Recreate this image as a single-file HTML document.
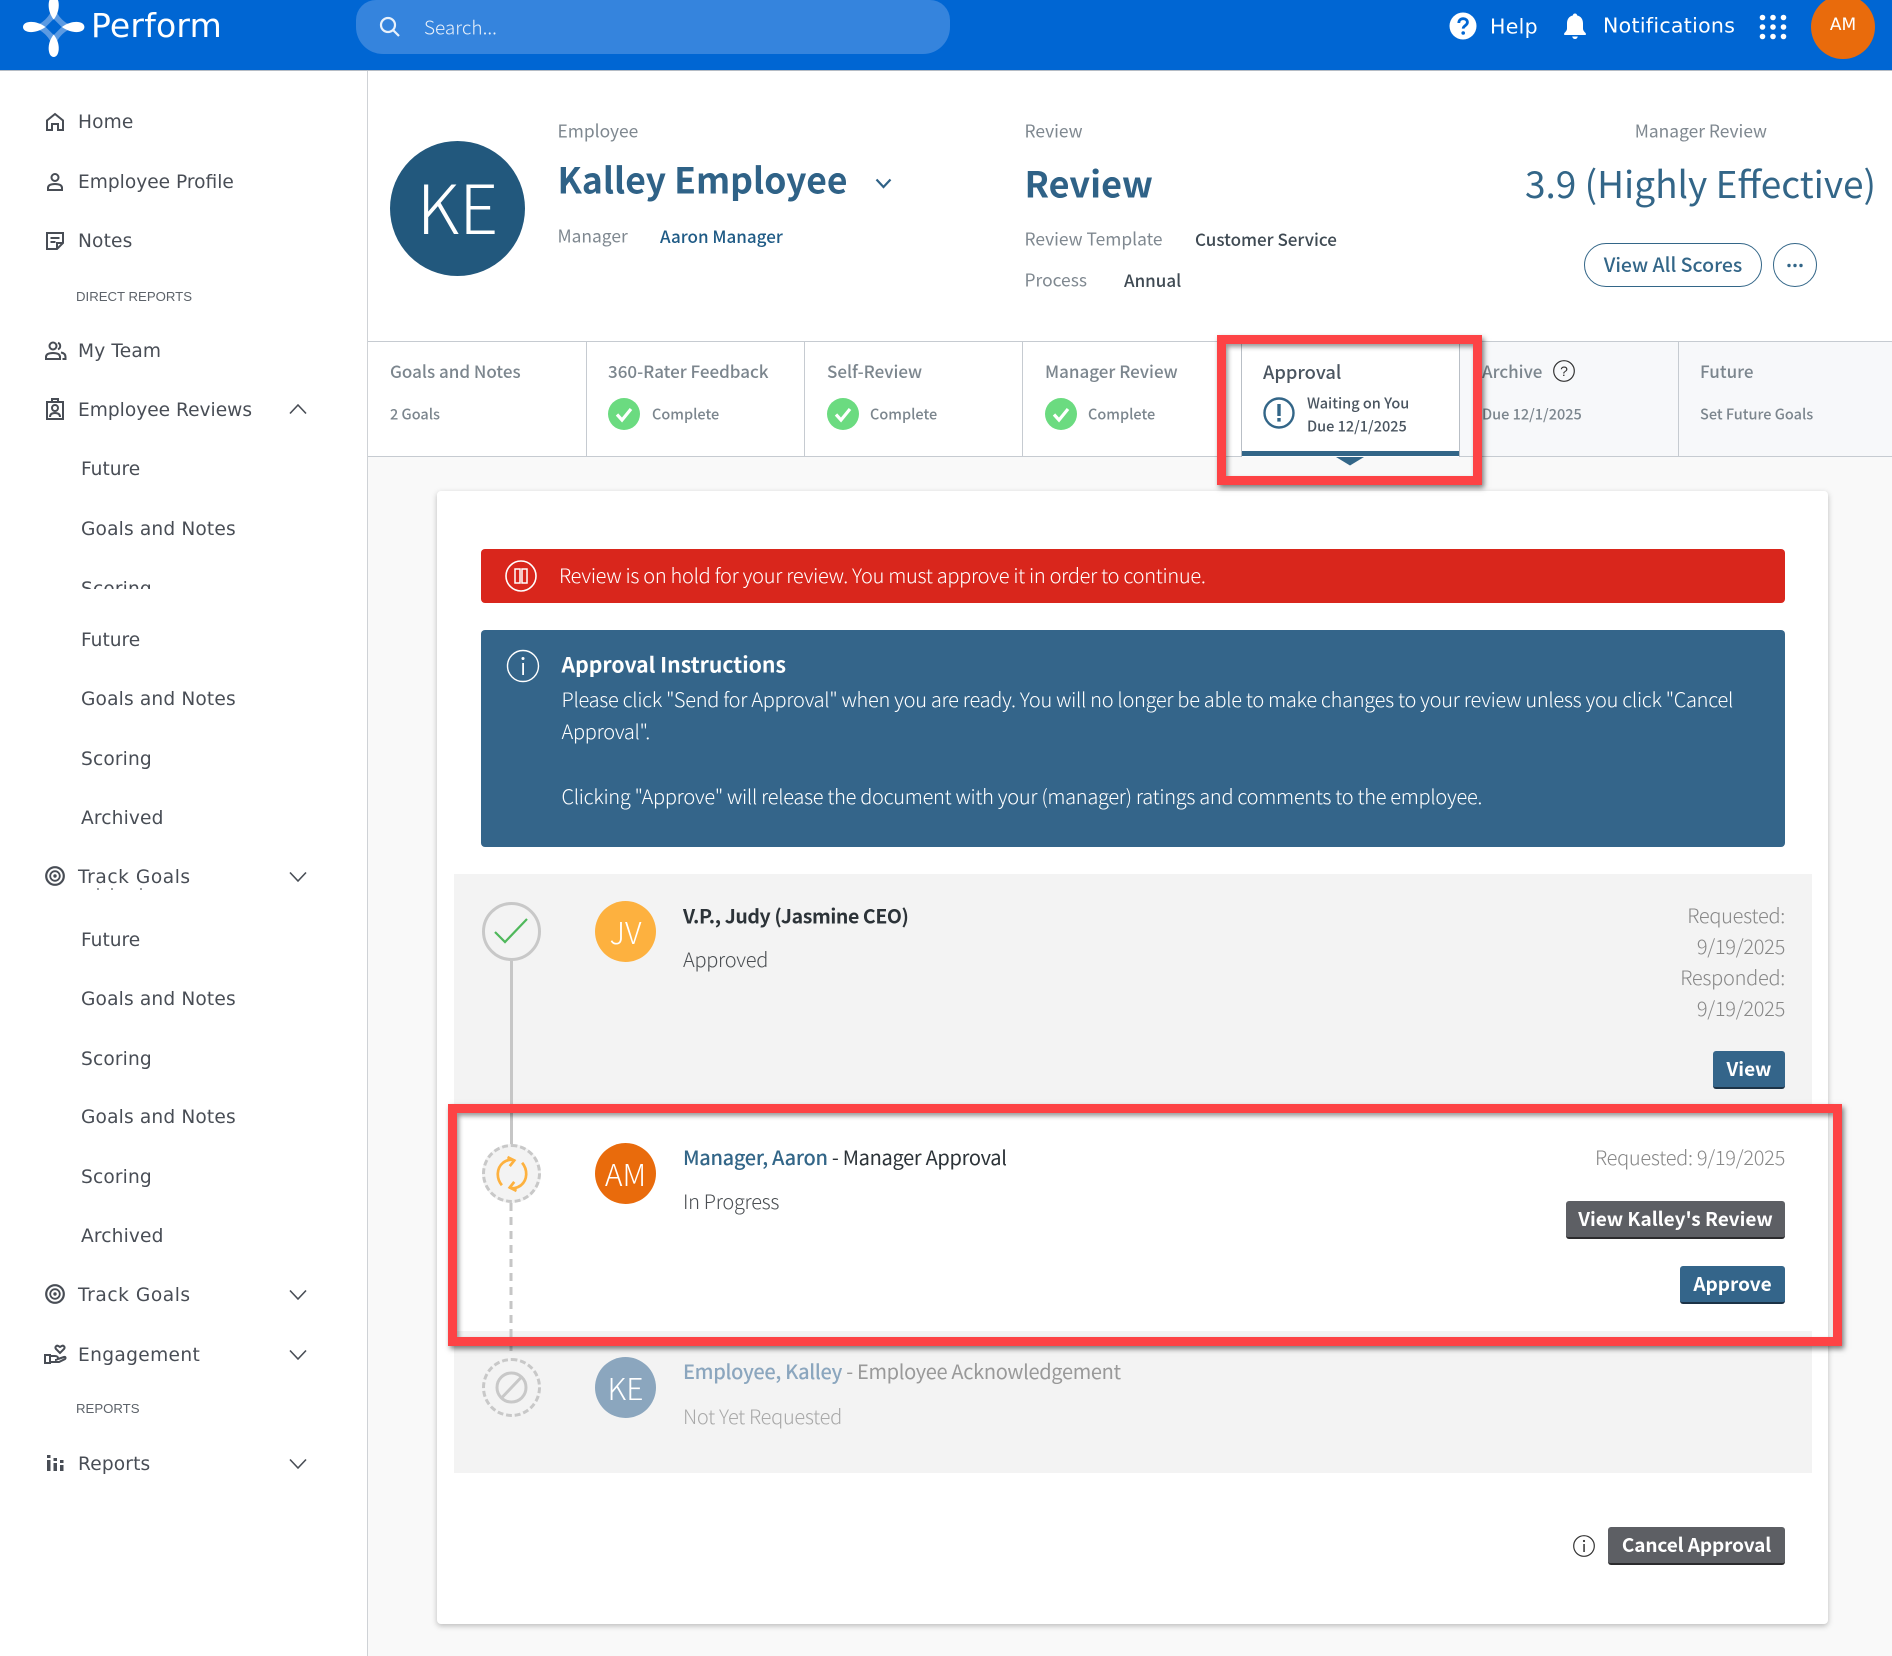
<!DOCTYPE html>
<html lang="en"><head><meta charset="utf-8"><title>Perform</title>
<style>
html,body{margin:0;padding:0}
body{width:1892px;height:1656px;position:relative;overflow:hidden;background:#fff;font-family:"Noto Sans CJK JP","Liberation Sans",sans-serif;color:#333}
.a{position:absolute}
.t{position:absolute;white-space:nowrap;line-height:1.2;transform:translateY(-50%)}
.n{font-family:"DejaVu Sans",sans-serif;font-size:18.6px;color:#484d55;letter-spacing:.15px;margin-top:2px}
.c{font-family:"Liberation Sans",sans-serif;font-size:13.2px;color:#5d636a;margin-top:.5px}
.lb{font-size:17.4px;color:#7f8890}
.tl{font-size:17px;color:#7c868e;font-weight:500;margin-top:-1px}
.ts{font-size:14.5px;color:#7c868e;font-weight:500;margin-top:-1px}
.ab{font-size:20px;font-weight:300;color:#fff;letter-spacing:-.29px;margin-top:-1px}
.dt{font-size:20px;font-weight:300;color:#888;right:107px;letter-spacing:-.28px;margin-top:-1px}
.b{font-size:20px;letter-spacing:-.3px;margin-top:-1px}
.btn{position:absolute;box-sizing:border-box;height:38px;border-radius:3px;border-bottom:2px solid #1c3347;background:#34658a;color:#fff;font-size:19px;font-weight:700;line-height:36px;text-align:center;white-space:nowrap}
.btn.g{background:#5d5f64;border-bottom-color:#2b2b2d}
.av{position:absolute;border-radius:50%;color:#fff;text-align:center;font-weight:300}
.tab{position:absolute;top:341px;height:116px;width:218px;box-sizing:border-box;border-right:1px solid #c6cbd1}
svg{position:absolute;overflow:visible}
.red{position:absolute;box-sizing:border-box;border:9px solid #fd4345;box-shadow:2px 3px 5px rgba(0,0,0,.5),inset 2px 3px 5px rgba(0,0,0,.4)}
</style></head><body>

<!-- content bg -->
<div class="a" style="left:368px;top:457px;width:1524px;height:1199px;background:#f9f9f9"></div>

<!-- header -->
<div class="a" style="left:0;top:0;width:1892px;height:70px;background:#0066d3;border-bottom:1px solid #b5bcc5"></div>
<svg style="left:15px;top:-5px" width="80" height="70" viewBox="0 0 80 70">
<path d="M38.7 8 C36 22 27 30 15 32 C27 34 36 42 38.7 56 C41.4 42 50.4 34 62.4 32 C50.4 30 41.4 22 38.7 8Z" fill="#5b9ae2"/>
<path d="M38.7 24 L46.7 32 L38.7 40 L30.7 32Z" fill="#0066d3"/>
<path d="M38.7 24.500 C31 15 33 1 38.7 1 C44.4 1 46.4 15 38.7 24.500Z" fill="#fff"/>
<path d="M38.7 39.500 C31 49 33 62 38.7 62 C44.4 62 46.4 49 38.7 39.500Z" fill="#fff"/>
<path d="M30.500 32 C20 24.500 8 26 8 32 C8 38 20 39.500 30.500 32Z" fill="#fff"/>
<path d="M46.900 32 C57.400 24.500 69.400 26 69.400 32 C69.400 38 57.400 39.500 46.900 32Z" fill="#fff"/>
</svg>
<div class="t" style="left:91px;top:26px;font-family:'DejaVu Sans',sans-serif;font-size:33px;color:#fff;letter-spacing:.2px">Perform</div>
<div class="a" style="left:356px;top:0;width:594px;height:54px;background:#3584dd;border-radius:20px 20px 27px 27px"></div>
<svg style="left:378px;top:15px" width="24" height="24" viewBox="0 0 24 24" fill="none" stroke="#e8f1fb" stroke-width="2.200"><circle cx="10" cy="10" r="7"/><path d="M15.500 15.500L21 21"/></svg>
<div class="t" style="left:424px;top:28px;font-size:19px;color:#e8f0fa;font-weight:300">Search...</div>

<svg style="left:1449px;top:12px" width="28" height="28" viewBox="0 0 28 28"><circle cx="14" cy="14" r="13.500" fill="#fff"/><path d="M9.800 11c0-2.800 2-4.300 4.400-4.300s4.200 1.500 4.200 3.700c0 3.200-4.200 3.200-4.200 6.200" fill="none" stroke="#0066d3" stroke-width="2.800"/><circle cx="14.200" cy="21" r="1.800" fill="#0066d3"/></svg>
<div class="t" style="left:1490px;top:26.500px;font-family:'DejaVu Sans',sans-serif;font-size:20.500px;color:#fff;letter-spacing:.3px">Help</div>
<svg style="left:1563px;top:12px" width="24" height="28" viewBox="0 0 24 28" fill="#fff"><path d="M12 1.500c1.300 0 2 .8 2.100 1.900 4 1 5.900 4 5.900 8v5c0 2 1.200 3.300 2.800 4.800V23H1.200v-1.800C2.800 19.700 4 18.400 4 16.400v-5c0-4 1.900-7 5.900-8C10 2.300 10.700 1.500 12 1.500z"/><path d="M9.200 24.500h5.600c-.3 1.500-1.400 2.500-2.800 2.500s-2.500-1-2.800-2.500z"/></svg>
<div class="t" style="left:1603px;top:26px;font-family:'DejaVu Sans',sans-serif;font-size:20.500px;color:#fff;letter-spacing:.3px">Notifications</div>
<svg style="left:1758px;top:14px" width="30" height="26" viewBox="0 0 30 26" fill="#fff"><circle cx="4.500" cy="3.500" r="2.800"/><circle cx="15" cy="3.500" r="2.800"/><circle cx="25.500" cy="3.500" r="2.800"/><circle cx="4.500" cy="13" r="2.800"/><circle cx="15" cy="13" r="2.800"/><circle cx="25.500" cy="13" r="2.800"/><circle cx="4.500" cy="22.500" r="2.800"/><circle cx="15" cy="22.500" r="2.800"/><circle cx="25.500" cy="22.500" r="2.800"/></svg>
<div class="a" style="left:1811px;top:-5px;width:64px;height:64px;border-radius:50%;background:#e96b0c"></div>
<div class="t" style="left:1811px;width:64px;text-align:center;top:25px;font-family:'DejaVu Sans',sans-serif;font-size:17px;color:#fff">AM</div>

<!-- sidebar -->
<div class="a" style="left:367px;top:71px;width:1px;height:1585px;background:#cfd2d6"></div>

<svg style="left:45px;top:112px" width="20" height="20" viewBox="0 0 20 20" fill="none" stroke="#484d55" stroke-width="2"><path d="M2 18V8.500L10 2l8 6.500V18h-5v-6H7v6z"/></svg>
<div class="t n" style="left:78px;top:121px">Home</div>
<svg style="left:45px;top:172px" width="20" height="20" viewBox="0 0 20 20" fill="none" stroke="#484d55" stroke-width="2"><circle cx="10" cy="5.500" r="3.500"/><path d="M3 18v-2c0-3 3-4 7-4s7 1 7 4v2z"/></svg>
<div class="t n" style="left:78px;top:181px;letter-spacing:0">Employee Profile</div>
<svg style="left:45px;top:231px" width="20" height="20" viewBox="0 0 20 20" fill="none" stroke="#484d55" stroke-width="2"><path d="M2 2h16v10l-6 6H2zM12 18v-6h6M5.500 7h9M5.500 11h5"/></svg>
<div class="t n" style="left:78px;top:240px">Notes</div>
<div class="t c" style="left:76px;top:296px">DIRECT REPORTS</div>
<svg style="left:44px;top:341px" width="23" height="20" viewBox="0 0 23 20" fill="none" stroke="#484d55" stroke-width="2"><circle cx="9" cy="5" r="3.500"/><path d="M2 18v-2c0-3 3-4 7-4s7 1 7 4v2z"/><path d="M14 1.800a3.500 3.500 0 0 1 0 6.500M17 11.500c3 .5 4.500 2 4.500 4.500v2h-3"/></svg>
<div class="t n" style="left:78px;top:350px">My Team</div>
<svg style="left:45px;top:398px" width="20" height="22" viewBox="0 0 20 22" fill="none" stroke="#484d55" stroke-width="2"><path d="M2 4h16v17H2z"/><path d="M7 4V1h6v3"/><circle cx="10" cy="10" r="3"/><path d="M5 19c0-3 2-4 5-4s5 1 5 4"/></svg>
<div class="t n" style="left:78px;top:409px;letter-spacing:0">Employee Reviews</div>
<svg style="left:289px;top:403px" width="18" height="12" viewBox="0 0 18 12" fill="none" stroke="#484d55" stroke-width="1.600"><path d="M1 10.500L9 2l8 8.500"/></svg>

<div class="t n" style="left:81px;top:468px;letter-spacing:0">Future</div>
<div class="t n" style="left:81px;top:528px">Goals and Notes</div>
<div class="a" style="left:60px;top:570px;width:200px;height:19px;overflow:hidden"><div class="t n" style="left:21px;top:18px">Scoring</div></div>
<div class="t n" style="left:81px;top:639px;letter-spacing:0">Future</div>
<div class="t n" style="left:81px;top:698px">Goals and Notes</div>
<div class="t n" style="left:81px;top:758px">Scoring</div>
<div class="t n" style="left:81px;top:817px">Archived</div>
<svg style="left:45px;top:866px" width="20" height="20" viewBox="0 0 20 20" fill="none" stroke="#484d55"><circle cx="10" cy="10" r="8.800" stroke-width="2.200"/><circle cx="10" cy="10" r="4.800" stroke-width="1.800"/><circle cx="10" cy="10" r="1.700" fill="#484d55" stroke="none"/></svg>
<div class="t n" style="left:78px;top:876px;letter-spacing:.55px">Track Goals</div>
<div class="a" style="left:97px;top:888px;width:2px;height:2px;background:#9a9da2"></div><div class="a" style="left:111px;top:888px;width:2px;height:2px;background:#9a9da2"></div><div class="a" style="left:140px;top:888px;width:2px;height:2px;background:#9a9da2"></div>
<svg style="left:289px;top:871px" width="18" height="12" viewBox="0 0 18 12" fill="none" stroke="#484d55" stroke-width="1.600"><path d="M1 1.500L9 10l8-8.500"/></svg>
<div class="t n" style="left:81px;top:939px;letter-spacing:0">Future</div>
<div class="t n" style="left:81px;top:998px">Goals and Notes</div>
<div class="t n" style="left:81px;top:1058px">Scoring</div>
<div class="t n" style="left:81px;top:1116px">Goals and Notes</div>
<div class="t n" style="left:81px;top:1176px">Scoring</div>
<div class="t n" style="left:81px;top:1235px">Archived</div>
<svg style="left:45px;top:1284px" width="20" height="20" viewBox="0 0 20 20" fill="none" stroke="#484d55"><circle cx="10" cy="10" r="8.800" stroke-width="2.200"/><circle cx="10" cy="10" r="4.800" stroke-width="1.800"/><circle cx="10" cy="10" r="1.700" fill="#484d55" stroke="none"/></svg>
<div class="t n" style="left:78px;top:1294px;letter-spacing:.55px">Track Goals</div>
<svg style="left:289px;top:1289px" width="18" height="12" viewBox="0 0 18 12" fill="none" stroke="#484d55" stroke-width="1.600"><path d="M1 1.500L9 10l8-8.500"/></svg>
<svg style="left:44px;top:1344px" width="23" height="20" viewBox="0 0 23 20" fill="none" stroke="#484d55" stroke-width="2"><path d="M1 11h5v8H1zM6 12h5c2 0 3 1 3 2s-1 2-3 2M6 18h9l6-3c1-1 .5-2.500-1-2l-6 2"/><path d="M16 9l-4-4c-1.500-2 .5-4 2.300-3l1.700 1 1.700-1c1.800-1 3.800 1 2.300 3z"/></svg>
<div class="t n" style="left:78px;top:1354px;letter-spacing:.35px">Engagement</div>
<svg style="left:289px;top:1349px" width="18" height="12" viewBox="0 0 18 12" fill="none" stroke="#484d55" stroke-width="1.600"><path d="M1 1.500L9 10l8-8.500"/></svg>
<div class="t c" style="left:76px;top:1408px">REPORTS</div>
<svg style="left:47px;top:1454px" width="18" height="18" viewBox="0 0 18 18" fill="#484d55"><rect x="0" y="6" width="3.500" height="11"/><rect x="0" y="1" width="3.500" height="3"/><rect x="6.500" y="9" width="3.500" height="8"/><rect x="6.500" y="4" width="3.500" height="3"/><rect x="13" y="11" width="3.500" height="6"/><rect x="13" y="6" width="3.500" height="3"/></svg>
<div class="t n" style="left:78px;top:1463px">Reports</div>
<svg style="left:289px;top:1458px" width="18" height="12" viewBox="0 0 18 12" fill="none" stroke="#484d55" stroke-width="1.600"><path d="M1 1.500L9 10l8-8.500"/></svg>

<!-- employee header -->
<div class="av" style="left:390px;top:141px;width:135px;height:135px;background:#22587d;font-size:68px;line-height:127px;font-weight:200">KE</div>
<div class="t lb" style="left:557.500px;top:132px">Employee</div>
<div class="t" style="left:557.500px;top:180px;font-size:35.500px;font-weight:700;color:#2f6287">Kalley Employee</div>
<svg style="left:875px;top:178px" width="17" height="11" viewBox="0 0 17 11" fill="none" stroke="#2f6287" stroke-width="2.200"><path d="M1.500 1.500L8.500 9l7-7.500"/></svg>
<div class="t lb" style="left:557.500px;top:237px">Manager</div>
<div class="t" style="left:660px;top:236px;font-size:17px;font-weight:500;color:#1f5b86">Aaron Manager</div>

<div class="t lb" style="left:1024.500px;top:132px">Review</div>
<div class="t" style="left:1024.500px;top:183px;font-size:36px;font-weight:700;color:#2f6287">Review</div>
<div class="t lb" style="left:1024.500px;top:240px">Review Template</div>
<div class="t" style="left:1195px;top:239px;font-size:17px;font-weight:500;color:#3f4a53">Customer Service</div>
<div class="t lb" style="left:1024.500px;top:281px">Process</div>
<div class="t" style="left:1124px;top:280px;font-size:17px;font-weight:500;color:#3f4a53">Annual</div>

<div class="t lb" style="right:125px;top:132px">Manager Review</div>
<div class="t" style="right:16px;top:182px;font-size:37px;color:#336688">3.9 (Highly Effective)</div>
<div class="a" style="left:1584px;top:243px;width:178px;height:44px;box-sizing:border-box;border:1.500px solid #336688;border-radius:22px;color:#336688;font-size:19.500px;font-weight:500;line-height:40px;text-align:center;white-space:nowrap">View All Scores</div>
<div class="a" style="left:1773px;top:243px;width:44px;height:44px;box-sizing:border-box;border:1.500px solid #336688;border-radius:50%"></div>
<svg style="left:1786px;top:263px" width="18" height="5" fill="#336688"><circle cx="3" cy="2.500" r="1.700"/><circle cx="9" cy="2.500" r="1.700"/><circle cx="15" cy="2.500" r="1.700"/></svg>

<!-- tabs -->
<div class="a" style="left:1460px;top:342px;width:432px;height:114px;background:#f7f8fa"></div>
<div class="a" style="left:368px;top:341px;width:1524px;height:116px;border-top:1px solid #c6cbd1;border-bottom:1px solid #c6cbd1;box-sizing:border-box"></div>
<div class="tab" style="left:368px;width:219px"></div>
<div class="tab" style="left:587px"></div>
<div class="tab" style="left:805px"></div>
<div class="tab" style="left:1023px;width:219px"></div>
<div class="tab" style="left:1460px;width:219px"></div>
<div class="a" style="left:1241px;top:342px;width:219px;height:115px;background:#fff;border-left:1px solid #b9bfc6;border-right:1px solid #b9bfc6;box-sizing:border-box"></div>

<div class="t tl" style="left:390px;top:372px">Goals and Notes</div>
<div class="t ts" style="left:390px;top:415px">2 Goals</div>
<div class="t tl" style="left:608px;top:372px">360-Rater Feedback</div>
<svg style="left:608px;top:398px" width="32" height="32" viewBox="0 0 32 32"><circle cx="16" cy="16" r="16" fill="#6bdb80"/><path d="M9 16.500l5 5.500 9-11" fill="none" stroke="#fff" stroke-width="3.200"/></svg>
<div class="t ts" style="left:652px;top:415px">Complete</div>
<div class="t tl" style="left:827px;top:372px">Self-Review</div>
<svg style="left:827px;top:398px" width="32" height="32" viewBox="0 0 32 32"><circle cx="16" cy="16" r="16" fill="#6bdb80"/><path d="M9 16.500l5 5.500 9-11" fill="none" stroke="#fff" stroke-width="3.200"/></svg>
<div class="t ts" style="left:870px;top:415px">Complete</div>
<div class="t tl" style="left:1045px;top:372px">Manager Review</div>
<svg style="left:1045px;top:398px" width="32" height="32" viewBox="0 0 32 32"><circle cx="16" cy="16" r="16" fill="#6bdb80"/><path d="M9 16.500l5 5.500 9-11" fill="none" stroke="#fff" stroke-width="3.200"/></svg>
<div class="t ts" style="left:1088px;top:415px">Complete</div>
<div class="t tl" style="left:1263px;top:372.500px;margin-top:0;color:#4a5560;font-size:18.300px">Approval</div>
<svg style="left:1263px;top:397px" width="32" height="32" viewBox="0 0 32 32"><circle cx="16" cy="16" r="14.500" fill="none" stroke="#336688" stroke-width="2.400"/><rect x="14.300" y="7" width="3.400" height="12" fill="#336688"/><rect x="14.300" y="21" width="3.400" height="3.600" fill="#336688"/></svg>
<div class="t ts" style="left:1307px;top:404px;color:#4a5560">Waiting on You</div>
<div class="t ts" style="left:1307px;top:427px;color:#4a5560">Due 12/1/2025</div>
<div class="a" style="left:1242px;top:451px;width:217px;height:5px;background:#336688"></div>
<svg style="left:1336px;top:457px" width="28" height="9"><path d="M0 0h28L14 8.500z" fill="#336688"/></svg>
<div class="t tl" style="left:1482px;top:372px">Archive</div>
<svg style="left:1553px;top:360px" width="22" height="22" viewBox="0 0 22 22"><circle cx="11" cy="11" r="10.300" fill="none" stroke="#333" stroke-width="1.200"/><text x="11" y="16" font-size="14" text-anchor="middle" fill="#333" font-family="Liberation Sans">?</text></svg>
<div class="t ts" style="left:1482px;top:415px">Due 12/1/2025</div>
<div class="t tl" style="left:1700px;top:372px">Future</div>
<div class="t ts" style="left:1700px;top:415px">Set Future Goals</div>

<!-- card -->
<div class="a" style="left:437px;top:491px;width:1391px;height:1133px;background:#fff;border-radius:4px;box-shadow:0 2px 6px rgba(0,0,0,.25)"></div>
<div class="a" style="left:481px;top:549px;width:1304px;height:54px;background:#d9261c;border-radius:4px"></div>
<svg style="left:505px;top:560px" width="32" height="32" viewBox="0 0 32 32"><circle cx="16" cy="16" r="15" fill="none" stroke="#fff" stroke-width="1.600"/><rect x="10" y="9" width="5" height="14" fill="none" stroke="#fff" stroke-width="1.500"/><rect x="17" y="9" width="5" height="14" fill="none" stroke="#fff" stroke-width="1.500"/></svg>
<div class="t ab" style="left:559px;top:576px">Review is on hold for your review. You must approve it in order to continue.</div>

<div class="a" style="left:481px;top:630px;width:1304px;height:217px;background:#34658a;border-radius:4px"></div>
<svg style="left:506px;top:649px" width="34" height="34" viewBox="0 0 34 34"><circle cx="17" cy="17" r="15.500" fill="none" stroke="#fff" stroke-width="1.400"/><rect x="16.200" y="14" width="1.800" height="12" fill="#fff"/><circle cx="17" cy="9.500" r="1.500" fill="#fff"/></svg>
<div class="t" style="left:561.500px;top:663.500px;font-size:21.200px;font-weight:700;color:#fff">Approval Instructions</div>
<div class="t ab" style="left:561.500px;top:700px">Please click "Send for Approval" when you are ready. You will no longer be able to make changes to your review unless you click "Cancel</div>
<div class="t ab" style="left:561.500px;top:732px">Approval".</div>
<div class="t ab" style="left:561.500px;top:797px">Clicking "Approve" will release the document with your (manager) ratings and comments to the employee.</div>

<!-- steps -->
<div class="a" style="left:454px;top:874px;width:1358px;height:599px;background:#f3f3f3"></div>
<div class="a" style="left:454px;top:1106px;width:1358px;height:225px;background:#fff"></div>
<div class="a" style="left:509.500px;top:960px;width:3px;height:186px;background:#c6c6c6"></div>
<div class="a" style="left:481.500px;top:902px;width:59px;height:59px;box-sizing:border-box;border:3px solid #c8c8c8;border-radius:50%;background:#f3f3f3"></div>
<svg style="left:494px;top:918px" width="34" height="26" viewBox="0 0 34 26" fill="none" stroke="#4fb85b" stroke-width="2.200"><path d="M1 14l10 10L33 1"/></svg>
<div class="av" style="left:595px;top:901px;width:61px;height:61px;background:#fdb13f;font-size:30px;line-height:61px">JV</div>
<div class="t b" style="left:683px;top:916px;font-size:19.500px;font-weight:700;letter-spacing:-.4px;color:#2c3338">V.P., Judy (Jasmine CEO)</div>
<div class="t b" style="left:683px;top:960px;font-weight:300;color:#4b4f53">Approved</div>
<div class="t dt" style="top:916px">Requested:</div>
<div class="t dt" style="top:947px">9/19/2025</div>
<div class="t dt" style="top:978px">Responded:</div>
<div class="t dt" style="top:1009px">9/19/2025</div>
<div class="btn" style="left:1713px;top:1051px;width:72px">View</div>

<svg style="left:509px;top:1203px" width="4" height="150"><path d="M2 0V150" stroke="#c6c6c6" stroke-width="3" stroke-dasharray="8 6" fill="none"/></svg>
<div class="a" style="left:481.500px;top:1144px;width:59px;height:59px;box-sizing:border-box;border:3px dashed #c8c8c8;border-radius:50%;background:#f3f3f3"></div>
<svg style="left:494px;top:1156px" width="36" height="36" viewBox="0 0 32 32" fill="none" stroke="#fdb13f" stroke-width="2.400"><path d="M7 26C2 20 2 11 8 6c4-3 8-3 10-2"/><path d="M25 6c5 6 5 15-1 20-4 3-8 3-10 2"/><path d="M12 1l6 3-4 5M20 31l-6-3 4-5"/></svg>
<div class="av" style="left:595px;top:1143px;width:61px;height:61px;background:#e96b0c;font-size:30px;line-height:61px">AM</div>
<div class="t b" style="left:683px;top:1158px;color:#2c3338"><span style="font-weight:500;color:#336688">Manager, Aaron</span> - Manager Approval</div>
<div class="t b" style="left:683px;top:1202px;font-weight:300;color:#4b4f53">In Progress</div>
<div class="t dt" style="top:1158px">Requested: 9/19/2025</div>
<div class="btn g" style="left:1566px;top:1201px;width:219px">View Kalley's Review</div>
<div class="btn" style="left:1680px;top:1266px;width:105px">Approve</div>

<div class="a" style="left:481.500px;top:1358px;width:59px;height:59px;box-sizing:border-box;border:3px dashed #c8c8c8;border-radius:50%;background:#f3f3f3"></div>
<svg style="left:495px;top:1371px" width="33" height="33" viewBox="0 0 33 33" fill="none" stroke="#c8c8c8" stroke-width="3"><circle cx="16.500" cy="16.500" r="14.500"/><path d="M6.500 27L26.500 6"/></svg>
<div class="av" style="left:595px;top:1357px;width:61px;height:61px;background:#8ba6be;font-size:30px;line-height:61px">KE</div>
<div class="t b" style="left:683px;top:1372px;color:#999;letter-spacing:-.33px"><span style="font-weight:500;color:#8ba6be">Employee, Kalley</span> - Employee Acknowledgement</div>
<div class="t b" style="left:683px;top:1417px;font-weight:300;color:#a9a9a9">Not Yet Requested</div>

<svg style="left:1573px;top:1535px" width="22" height="22" viewBox="0 0 22 22"><circle cx="11" cy="11" r="10.300" fill="none" stroke="#333" stroke-width="1.200"/><rect x="10.300" y="9" width="1.500" height="8" fill="#333"/><circle cx="11" cy="6" r="1.100" fill="#333"/></svg>
<div class="btn g" style="left:1608px;top:1527px;width:177px;letter-spacing:-.1px">Cancel Approval</div>

<!-- red annotation boxes -->
<div class="red" style="left:1217px;top:335px;width:265px;height:150px"></div>
<div class="red" style="left:448px;top:1104px;width:1394px;height:242px"></div>
</body></html>
